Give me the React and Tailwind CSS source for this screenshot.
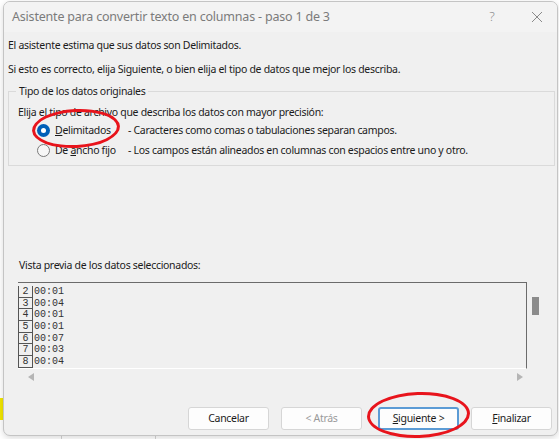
import React from "react";

const rows = [
  ["2", "00:01"],
  ["3", "00:04"],
  ["4", "00:01"],
  ["5", "00:01"],
  ["6", "00:07"],
  ["7", "00:03"],
  ["8", "00:04"],
];

function Radio({ checked }) {
  if (checked) {
    return (
      <span className="block w-[13px] h-[13px] rounded-full bg-[#005fb8] flex items-center justify-center">
        <span className="block w-[5px] h-[5px] rounded-full bg-white" />
      </span>
    );
  }
  return <span className="block w-[13px] h-[13px] rounded-full border border-[#7a7a7a] bg-[#f7f7f7]" />;
}

function Button({ children, disabled, focused }) {
  return (
    <button
      disabled={disabled}
      className={`w-[81px] h-[23px] rounded-[3px] bg-[#fdfdfd] text-[10.5px] leading-none ${
        focused ? "border-2 border-[#5b9bd5]" : "border border-[#d6d6d6]"
      } ${disabled ? "text-[#9a9a9a]" : "text-[#1b1b1b]"}`}
    >
      {children}
    </button>
  );
}

export default function App() {
  return (
    <div className="relative w-[559px] h-[439px] overflow-hidden bg-white pl-[3px] pt-[1px] font-['Noto_Sans',sans-serif] tracking-[-0.3px]">
      {/* sheet cells peeking out behind the dialog */}
      <div className="absolute left-0 top-[398px] w-[3px] h-[22px] bg-[#f2e600]" />
      <div className="absolute left-[61px] bottom-0 w-px h-[3px] bg-[#d4d4d4]" />
      <div className="absolute left-[155px] bottom-0 w-px h-[3px] bg-[#d4d4d4]" />

      <div className="relative w-[555px] h-[435px] rounded-[7px] border border-[#c4c4c4] bg-[#f0f0f0] shadow-[0_2px_6px_rgba(0,0,0,0.15)] flex flex-col overflow-hidden">
        {/* title bar */}
        <div className="h-[30px] shrink-0 flex items-center pl-[8px] bg-[#f3f3f3] text-[#7b7b7b] text-[12.5px] tracking-[-0.2px]">
          <span className="flex-1">Asistente para convertir texto en columnas - paso 1 de 3</span>
          <span className="w-[50px] text-center text-[13px] font-light text-[#8a8a8a]">?</span>
          <span className="w-[40px] flex justify-center">
            <svg width="12" height="12" viewBox="0 0 12 12" stroke="#8a8a8a" strokeWidth="1">
              <path d="M1 1 L11 11 M11 1 L1 11" />
            </svg>
          </span>
        </div>

        <div className="flex-1 flex flex-col px-[4px] text-[10.5px] text-[#1b1b1b]">
          <p className="mt-[6px] h-[14px] leading-[14px]">El asistente estima que sus datos son Delimitados.</p>
          <p className="mt-[10px] h-[14px] leading-[14px]">
            Si esto es correcto, elija Siguiente, o bien elija el tipo de datos que mejor los describa.
          </p>

          {/* group box */}
          <div className="mt-[15px] mr-[-2px] border border-[#dadada] pl-[9px] pb-[8px]">
            <div className="-mt-[8px] h-[14px] flex">
              <span className="ml-[-2px] px-[3px] leading-[14px] bg-[#f0f0f0]">Tipo de los datos originales</span>
            </div>
            <div className="mt-[7px] flex h-[14px] leading-[14px]">
              <span>Elija el tipo de archivo que describa los datos con mayor precisión:</span>
            </div>
            <div className="mt-[4px] flex items-center h-[14px] leading-[14px]">
              <span className="w-[37px] pl-[19px] flex"><Radio checked /></span>
              <span className="w-[73px]"><span className="underline">D</span>elimitados</span>
              <span>- Caracteres como comas o tabulaciones separan campos.</span>
            </div>
            <div className="mt-[6px] flex items-center h-[14px] leading-[14px]">
              <span className="w-[37px] pl-[19px] flex"><Radio /></span>
              <span className="w-[73px]">De <span className="underline">a</span>ncho fijo</span>
              <span>- Los campos están alineados en columnas con espacios entre uno y otro.</span>
            </div>
          </div>

          <p className="mt-[92px] ml-[11px] h-[14px] leading-[14px]">Vista previa de los datos seleccionados:</p>

          <div className="mt-[10px] ml-[10px] flex items-start">
            <div className="w-[509px] h-[87px] border-t border-r border-[#6b6b6b] border-b border-b-white overflow-hidden pt-[3px] font-['Liberation_Mono',monospace] text-[10px] tracking-normal text-[#333]">
              {rows.map(([n, t]) => (
                <div key={n} className="flex h-[11.7px] leading-[11.7px]">
                  <span className="w-[15px] border-l border-r border-b border-[#555] text-center">{n}</span>
                  <span className="pl-[1px]">{t}</span>
                </div>
              ))}
              <div className="w-[15px] h-[4px] border-l border-r border-[#555]" />
            </div>
            <div className="ml-[5px] mt-[15px] w-[7px] h-[18px] bg-[#8b8b8b]" />
          </div>

          <div className="ml-[20px] mt-[3px] w-[495px] flex justify-between h-[10px] items-center">
            <svg width="6" height="8" viewBox="0 0 6 8"><path d="M6 0 L0 4 L6 8 Z" fill="#b5b5b5" /></svg>
            <svg width="6" height="8" viewBox="0 0 6 8"><path d="M0 0 L6 4 L0 8 Z" fill="#b5b5b5" /></svg>
          </div>

          <div className="mt-[25px] flex justify-end pr-[1px]">
            <Button>Cancelar</Button>
            <span className="w-[12px]" />
            <Button disabled>&lt; Atrás</Button>
            <span className="w-[16px]" />
            <Button focused><span className="underline">S</span>iguiente &gt;</Button>
            <span className="w-[12px]" />
            <Button><span className="underline">F</span>inalizar</Button>
          </div>
        </div>
      </div>

      {/* red highlight rings */}
      <div className="absolute left-[32px] top-[109px] w-[88px] h-[39px] rounded-[50%] border-[3px] border-[#e8141c] -rotate-3" />
      <div className="absolute left-[367px] top-[392px] w-[103px] h-[46px] rounded-[50%] border-[3px] border-[#e8141c] -rotate-2" />
    </div>
  );
}
